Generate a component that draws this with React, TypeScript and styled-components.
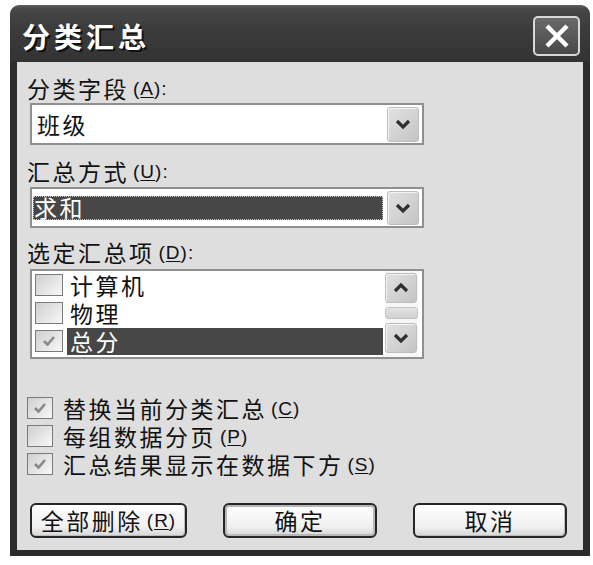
import styled, { createGlobalStyle } from "styled-components";

const Global = createGlobalStyle`
  html, body { margin: 0; padding: 0; background: #fff; }
  body { font-family: "Noto Sans CJK SC", "Noto Sans", sans-serif; }
`;

const Window = styled.div`
  margin: 5px 0 0 10px;
  width: 580px;
`;

const TitleBar = styled.div`
  height: 57px;
  box-sizing: border-box;
  padding: 5px 10px 0 12px;
  display: flex;
  align-items: center;
  justify-content: space-between;
  border-radius: 9px 9px 0 0;
  background: linear-gradient(#5e5e5e 0, #474747 4px, #3c3c3c 40%, #333 100%);
`;

const Title = styled.div`
  color: #fff;
  font-size: 28px;
  font-weight: bold;
  letter-spacing: 4px;
  line-height: 32px;
  text-shadow: 2px 2px 0 #111;
`;

const CloseButton = styled.div`
  width: 47px;
  height: 40px;
  box-sizing: border-box;
  border: 2px solid #d8d8d8;
  border-radius: 5px;
  background: linear-gradient(#6a6a6a, #484848);
  display: flex;
  align-items: center;
  justify-content: center;
`;

const Body = styled.div`
  background: #dedede;
  border: 7px solid #2c2c2c;
  border-top: none;
  border-bottom-width: 6px;
  padding: 12px 10px 12px 10px;
  display: flex;
  flex-direction: column;
`;

const Label = styled.div<{ $gap?: number }>`
  height: 28px;
  display: flex;
  align-items: center;
  font-size: 23px;
  letter-spacing: 2.5px;
  line-height: 1;
  color: #111;
  margin-top: ${(p) => p.$gap ?? 0}px;
  white-space: nowrap;
`;

const Key = styled.span`
  font-family: "Liberation Sans", sans-serif;
  font-size: 19px;
  line-height: 1;
  letter-spacing: 1px;
  margin-left: 4px;
  u { text-underline-offset: 2px; }
`;

const Combo = styled.div<{ $h: number; $gap: number }>`
  margin: ${(p) => p.$gap}px 0 0 3px;
  width: 394px;
  height: ${(p) => p.$h}px;
  box-sizing: border-box;
  border: 2px solid #8f8f8f;
  background: #fff;
  display: flex;
  align-items: center;
  padding: 0 3px 0 3px;
`;

const ComboText = styled.div<{ $selected?: boolean }>`
  flex: 1;
  height: 24px;
  margin-right: 4px;
  display: flex;
  align-items: center;
  box-sizing: border-box;
  font-size: 23px;
  letter-spacing: 2.5px;
  line-height: 1;
  color: ${(p) => (p.$selected ? "#fff" : "#111")};
  background: ${(p) => (p.$selected ? "#474747" : "transparent")};
  border: 1px ${(p) => (p.$selected ? "dotted #c8c8c8" : "solid transparent")};
  margin-left: ${(p) => (p.$selected ? -2 : 1)}px;
`;

const ArrowButton = styled.div<{ $h: number }>`
  width: 32px;
  height: ${(p) => p.$h}px;
  box-sizing: border-box;
  border: 1px solid #bdbdbd;
  border-radius: 3px;
  background: linear-gradient(135deg, #e2e2e2, #c4c4c4);
  box-shadow: inset 1px 1px 0 #f4f4f4;
  display: flex;
  align-items: center;
  justify-content: center;
  flex-shrink: 0;
`;

const ListBox = styled.div`
  margin: 3px 0 0 3px;
  width: 394px;
  height: 90px;
  box-sizing: border-box;
  border: 2px solid #8f8f8f;
  background: #fff;
  display: flex;
  overflow: hidden;
`;

const Items = styled.div`
  flex: 1;
  display: flex;
  flex-direction: column;
`;

const ListRow = styled.div`
  height: 28px;
  display: flex;
  align-items: center;
  padding-left: 3px;
`;

const ItemText = styled.div<{ $selected?: boolean }>`
  flex: 1;
  height: 27px;
  margin-left: 4px;
  padding-left: 3px;
  display: flex;
  align-items: center;
  font-size: 23px;
  letter-spacing: 2.5px;
  line-height: 1;
  color: ${(p) => (p.$selected ? "#fff" : "#111")};
  background: ${(p) => (p.$selected ? "#474747" : "transparent")};
`;

const ScrollBar = styled.div`
  width: 33px;
  margin: 0 4px 0 2px;
  padding-top: 2px;
  display: flex;
  flex-direction: column;
  gap: 4px;
  background: #f6f6f6;
`;

const Thumb = styled.div`
  height: 12px;
  box-sizing: border-box;
  border: 1px solid #c2c2c2;
  border-radius: 3px;
  background: linear-gradient(#e4e4e4, #cfcfcf);
`;

const Box = styled.span<{ $w: number; $h: number }>`
  width: ${(p) => p.$w}px;
  height: ${(p) => p.$h}px;
  box-sizing: border-box;
  border: 1px solid #7a7a7a;
  background: linear-gradient(135deg, #cfcfcf, #f8f8f8);
  display: inline-flex;
  align-items: center;
  justify-content: center;
  flex-shrink: 0;
`;

const Options = styled.div`
  margin-top: 35px;
  display: flex;
  flex-direction: column;
`;

const OptionRow = styled.div`
  height: 28px;
  display: flex;
  align-items: center;
  gap: 10px;
`;

const ButtonRow = styled.div`
  margin: 25px 0 0 3px;
  display: flex;
  gap: 36px;
`;

const Button = styled.button<{ $w: number; $default?: boolean }>`
  width: ${(p) => p.$w}px;
  height: 35px;
  padding: 0;
  box-sizing: border-box;
  border: 2px solid #262626;
  border-radius: 6px;
  background: linear-gradient(#ffffff, #f0f0f0 70%, #d6d6d6);
  box-shadow: ${(p) => (p.$default ? "inset 0 0 0 2px #b8b8b8" : "inset -1px -1px 0 #bbb")};
  display: flex;
  align-items: center;
  justify-content: center;
  font-family: "Noto Sans CJK SC", sans-serif;
  font-size: 23px;
  letter-spacing: 2.5px;
  line-height: 1;
  color: #111;
  white-space: nowrap;
`;

const Chevron = ({ up }: { up?: boolean }) => (
  <svg width="18" height="12" viewBox="0 0 18 12">
    <path
      d={up ? "M3 9 L9 3 L15 9" : "M3 3 L9 9 L15 3"}
      fill="none"
      stroke="#2f2f2f"
      strokeWidth="3.2"
    />
  </svg>
);

const Check = () => (
  <svg width="16" height="14" viewBox="0 0 16 14">
    <path d="M3 7 L6.5 10.5 L13 3" fill="none" stroke="#8a8a8a" strokeWidth="2.6" />
  </svg>
);

const items = [
  { name: "计算机", checked: false },
  { name: "物理", checked: false },
  { name: "总分", checked: true, selected: true },
];

const options = [
  { text: "替换当前分类汇总", key: "C", checked: true },
  { text: "每组数据分页", key: "P", checked: false },
  { text: "汇总结果显示在数据下方", key: "S", checked: true },
];

export default function App() {
  return (
    <>
      <Global />
      <Window>
        <TitleBar>
          <Title>分类汇总</Title>
          <CloseButton>
            <svg width="26" height="24" viewBox="0 0 26 24">
              <path d="M3 2 L23 22 M23 2 L3 22" stroke="#fff" strokeWidth="4.5" />
            </svg>
          </CloseButton>
        </TitleBar>
        <Body>
          <Label>
            分类字段<Key>(<u>A</u>):</Key>
          </Label>
          <Combo $h={42} $gap={1}>
            <ComboText>班级</ComboText>
            <ArrowButton $h={35}>
              <Chevron />
            </ArrowButton>
          </Combo>

          <Label $gap={12}>
            汇总方式<Key>(<u>U</u>):</Key>
          </Label>
          <Combo $h={41} $gap={2}>
            <ComboText $selected>求和</ComboText>
            <ArrowButton $h={34}>
              <Chevron />
            </ArrowButton>
          </Combo>

          <Label $gap={10}>
            选定汇总项<Key>(<u>D</u>):</Key>
          </Label>
          <ListBox>
            <Items>
              {items.map((it) => (
                <ListRow key={it.name}>
                  <Box $w={28} $h={22}>{it.checked && <Check />}</Box>
                  <ItemText $selected={it.selected}>{it.name}</ItemText>
                </ListRow>
              ))}
            </Items>
            <ScrollBar>
              <ArrowButton $h={30}>
                <Chevron up />
              </ArrowButton>
              <Thumb />
              <ArrowButton $h={30}>
                <Chevron />
              </ArrowButton>
            </ScrollBar>
          </ListBox>

          <Options>
            {options.map((o) => (
              <OptionRow key={o.key}>
                <Box $w={26} $h={22}>{o.checked && <Check />}</Box>
                <Label>
                  {o.text}
                  <Key>(<u>{o.key}</u>)</Key>
                </Label>
              </OptionRow>
            ))}
          </Options>

          <ButtonRow>
            <Button $w={157}>
              全部删除<Key>(<u>R</u>)</Key>
            </Button>
            <Button $w={154} $default>
              确定
            </Button>
            <Button $w={154}>取消</Button>
          </ButtonRow>
        </Body>
      </Window>
    </>
  );
}
